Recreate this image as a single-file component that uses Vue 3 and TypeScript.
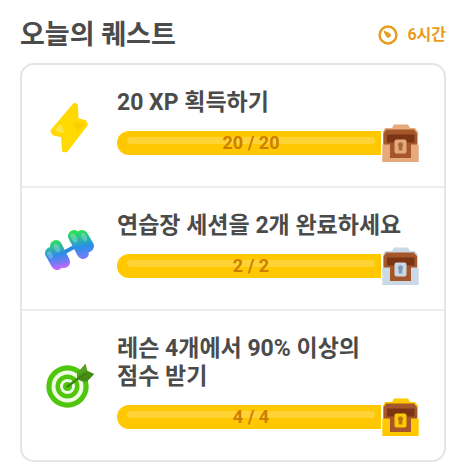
<script setup lang="ts">
type QuestIcon = 'bolt' | 'dumbbell' | 'target'

interface Quest {
  id: number
  icon: QuestIcon
  title: string
  done: number
  goal: number
  chest: 'bronze' | 'silver' | 'gold'
}

const quests: Quest[] = [
  { id: 1, icon: 'bolt', title: '20 XP 획득하기', done: 20, goal: 20, chest: 'bronze' },
  { id: 2, icon: 'dumbbell', title: '연습장 세션을 2개 완료하세요', done: 2, goal: 2, chest: 'silver' },
  { id: 3, icon: 'target', title: '레슨 4개에서 90% 이상의 점수 받기', done: 4, goal: 4, chest: 'gold' },
]

const percent = (q: Quest): string => `${Math.min(100, (q.done / q.goal) * 100)}%`
</script>

<template>
  <main class="page">
    <header class="head">
      <h1 class="title">오늘의 퀘스트</h1>
      <div class="timer">
        <svg class="clock" viewBox="0 0 20 20" aria-hidden="true">
          <circle cx="10" cy="10" r="8.4" fill="none" stroke="currentColor" stroke-width="2.5" />
          <path d="M6 6.2 L11.5 8.5 A2.1 2.1 0 1 1 8.4 11.2 Z" fill="currentColor" stroke="currentColor" stroke-width="1" stroke-linejoin="round" />
        </svg>
        <span>6시간</span>
      </div>
    </header>

    <ul class="card">
      <li v-for="q in quests" :key="q.id" class="quest">
        <svg v-if="q.icon === 'bolt'" class="icon" viewBox="0 0 48 48" aria-hidden="true">
          <path d="M28.5 3 L6.5 29 L8 31.5 L17 33.5 L18 48.2 L20 48.2 L39.8 22.5 L38.5 20 L30.5 18 L30 3.5 Z" fill="#ffd900" stroke="#ffd900" stroke-width="4" stroke-linejoin="round" />
          <path d="M8.5 29 L15 21.5 L18.5 31.2 Z" fill="#fbe44c" />
          <path d="M37.8 22.2 L31.5 30 L28.5 20 Z" fill="#f9cd00" />
        </svg>

        <svg v-else-if="q.icon === 'dumbbell'" class="icon" viewBox="0 0 48 48" aria-hidden="true">
          <defs>
            <linearGradient id="weight-left" gradientUnits="userSpaceOnUse" x1="8" y1="15" x2="14" y2="45">
              <stop offset="0" stop-color="#2ee65a" />
              <stop offset="0.5" stop-color="#2f8be6" />
              <stop offset="0.72" stop-color="#6f7cf4" />
              <stop offset="1" stop-color="#d862ff" />
            </linearGradient>
            <linearGradient id="weight-right" gradientUnits="userSpaceOnUse" x1="31" y1="5" x2="36" y2="36">
              <stop offset="0" stop-color="#27e84b" />
              <stop offset="0.55" stop-color="#2a8fe8" />
              <stop offset="1" stop-color="#8a78ff" />
            </linearGradient>
          </defs>
          <path d="M17 28 L30 21" stroke="#2b8bdc" stroke-width="4" />
          <g fill="none" stroke="url(#weight-left)" stroke-linecap="round">
            <path d="M5 28 L11 39" stroke-width="12" />
            <path d="M10 21 L18 37" stroke-width="12" />
          </g>
          <g fill="none" stroke="url(#weight-right)" stroke-linecap="round">
            <path d="M28 11 L37 28" stroke-width="12" />
            <path d="M36 11 L42 21" stroke-width="12" />
          </g>
          <g fill="#ffffff" opacity="0.24">
            <ellipse cx="4" cy="30" rx="2.4" ry="4" transform="rotate(-28 4 30)" />
            <ellipse cx="11" cy="23" rx="2.6" ry="4.6" transform="rotate(-28 11 23)" />
            <ellipse cx="28" cy="13" rx="2.7" ry="5" transform="rotate(-28 28 13)" />
            <ellipse cx="38" cy="12" rx="2.5" ry="4.4" transform="rotate(-28 38 12)" />
          </g>
        </svg>

        <svg v-else class="icon" viewBox="0 0 48 48" aria-hidden="true">
          <circle cx="21.5" cy="24.5" r="21.2" fill="#4fc50b" />
          <circle cx="21.5" cy="24.5" r="16" fill="#effbe5" />
          <circle cx="21.5" cy="24.5" r="12" fill="#4fc50b" />
          <circle cx="21.5" cy="24.5" r="7.5" fill="#effbe5" />
          <circle cx="21.5" cy="24.5" r="4.6" fill="#4fc50b" />
          <path d="M31 17 L31 11.5 L39.5 1.5 L41.5 9 L48 12 L41 19.5 L35 19 Z" fill="#55a01c" />
          <path d="M34 15.5 L41.5 9 L48 12 L41 19.5 L35 19 Z" fill="#468c14" />
          <path d="M21.5 24.5 L39 11.5" stroke="#3d860d" stroke-width="2.6" stroke-linecap="round" />
        </svg>

        <div class="body">
          <h2 class="name">{{ q.title }}</h2>
          <div class="progress">
            <div
              class="track"
              role="progressbar"
              :aria-label="q.title"
              aria-valuemin="0"
              :aria-valuenow="q.done"
              :aria-valuemax="q.goal"
            >
              <div class="fill" :style="{ width: percent(q) }"></div>
              <span class="count">{{ q.done }} / {{ q.goal }}</span>
            </div>
            <svg class="chest" :class="q.chest" viewBox="0 0 37 38" aria-hidden="true">
              <path class="metal" d="M3 4 H10 L12 0.5 H26 L28 4 H33 L36 8 V20 H1 V8 Z" />
              <path class="wood" d="M4 5.5 H32 L35 9.5 V24 H1.5 V9.5 Z" />
              <rect class="inside" x="5" y="10.5" width="27.5" height="8" />
              <path class="metal" d="M0.3 20.5 H8 V34 H29 V20.5 H36.7 V38 H0.3 Z" />
              <rect class="wood" x="8" y="19.5" width="21" height="14.5" />
              <rect class="metal" x="12.5" y="15.5" width="12" height="14" rx="2" />
              <path class="keyhole" d="M18.5 18.2 a2.6 2.6 0 0 1 1.8 4.5 V26.5 H16.7 V22.7 a2.6 2.6 0 0 1 1.8 -4.5 Z" />
            </svg>
          </div>
        </div>
      </li>
    </ul>
  </main>
</template>

<style>
body {
  margin: 0;
  background: #ffffff;
}
</style>

<style scoped>
.page {
  padding: 17px 20px 12px;
  color: #4b4b4b;
  font-family: Roboto, "Noto Sans CJK KR", sans-serif;
  font-weight: 700;
}

.head {
  display: flex;
  align-items: center;
  justify-content: space-between;
  margin-bottom: 10px;
}

.title {
  margin: 0;
  font-size: 27px;
  line-height: 36px;
}

.timer {
  display: flex;
  align-items: center;
  gap: 9px;
  color: #e99b1c;
  font-size: 16px;
  line-height: 24px;
}

.clock {
  width: 20px;
  height: 20px;
}

.card {
  margin: 0;
  padding: 0;
  list-style: none;
  border: 2px solid #e5e5e5;
  border-radius: 14px;
}

.quest {
  display: flex;
  align-items: center;
  gap: 23px;
  padding: 0 25px 0 24px;
}

.quest + .quest {
  border-top: 2px solid #ededed;
}

.icon {
  flex: none;
  width: 48px;
  height: 48px;
  overflow: visible;
}

.body {
  flex: 1;
  min-width: 0;
  padding: 24px 0 31px;
}

.name {
  margin: 0 0 14px;
  padding-right: 15px;
  font-size: 23px;
  line-height: 28px;
  word-break: keep-all;
}

.progress {
  display: flex;
  align-items: center;
  gap: 1px;
  height: 24px;
}

.track {
  display: grid;
  flex: 1;
  height: 24px;
  border-radius: 12px 0 0 12px;
  background: #e5e5e5;
  overflow: hidden;
}

.fill,
.count {
  grid-area: 1 / 1;
}

.fill {
  box-sizing: border-box;
  padding: 6px 6px 0 10px;
  background: #ffc800;
}

.fill::before {
  content: "";
  display: block;
  height: 7px;
  border-radius: 4px;
  background: #ffd335;
}

.count {
  padding-left: 4px;
  color: #cd7f00;
  font-size: 18px;
  line-height: 24px;
  text-align: center;
}

.chest {
  flex: none;
  width: 37px;
  height: 38px;
}

.wood {
  fill: #a5562b;
}

.inside {
  fill: #7b3514;
}

.bronze .metal {
  fill: #e6a97b;
}

.bronze .keyhole {
  fill: #a8693f;
}

.silver .metal {
  fill: #cbd8e5;
}

.silver .keyhole {
  fill: #7f9cb8;
}

.gold .metal {
  fill: #ffc800;
}

.gold .keyhole {
  fill: #b97812;
}
</style>
